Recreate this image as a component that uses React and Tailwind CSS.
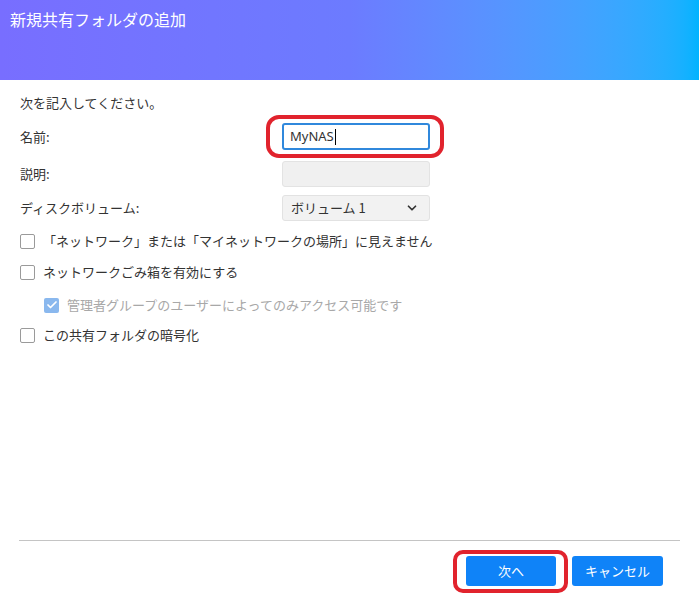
import React from 'react';
import { ChevronDown, Check } from 'lucide-react';

const font = { fontFamily: '"Noto Sans CJK JP", "Noto Sans", sans-serif' };

const Box = ({ checked }) =>
    checked ? (
        <span className="w-[15px] h-[15px] rounded-[2px] bg-[#8ab8ee] flex items-center justify-center shrink-0">
            <Check className="w-[12px] h-[12px] text-white" strokeWidth={3.5} />
        </span>
    ) : (
        <span className="w-[15px] h-[15px] rounded-[2px] border-[1.5px] border-[#9a9a9a] bg-white shrink-0" />
    );

const Option = ({ label, checked, disabled, className }) => (
    <div className={`flex items-center h-[20px] ${className}`}>
        <Box checked={checked} />
        <span className={`ml-[8px] ${disabled ? 'text-[#a8a8a8]' : 'text-[#333]'}`}>{label}</span>
    </div>
);

export default function App() {
    return (
        <div className="w-[699px] h-[599px] bg-white flex flex-col text-[13px] text-[#333]" style={font}>
            {/* Header */}
            <div className="h-[80px] shrink-0 bg-linear-to-r from-[#786eff] via-[#6c7bff] via-50% to-[#00b3ff] pl-[10px] pt-[7px]">
                <h1 className="text-[16px] text-white leading-[24px]">新規共有フォルダの追加</h1>
            </div>

            {/* Body */}
            <div className="flex-1 px-[20px] pt-[14px]">
                <p className="leading-[18px]">次を記入してください。</p>

                <div className="grid grid-cols-[262px_148px] items-center mt-[11px]">
                    <span>名前:</span>
                    <div className="relative h-[27px]">
                        <div className="h-full border-2 border-[#3088dc] rounded-[3px] flex items-center pl-[6px] text-[13px]" style={{ fontFamily: '"Noto Sans", sans-serif' }}>
                            MyNAS<span className="w-px h-[16px] bg-black ml-px" />
                        </div>
                        <div className="absolute -left-[16px] -right-[14px] -top-[8px] -bottom-[8px] border-[4px] border-[#e1232d] rounded-[13px] pointer-events-none" />
                    </div>
                </div>

                <div className="grid grid-cols-[262px_148px] items-center mt-[11px]">
                    <span>説明:</span>
                    <div className="h-[26px] bg-[#f0f0f0] border border-[#e3e3e3] rounded-[3px]" />
                </div>

                <div className="grid grid-cols-[262px_148px] items-center mt-[8px]">
                    <span>ディスクボリューム:</span>
                    <div className="h-[26px] bg-[#f2f2f2] border border-[#e2e2e2] rounded-[3px] flex items-center justify-between pl-[8px] pr-[10px]">
                        <span>ボリューム 1</span>
                        <ChevronDown className="w-[14px] h-[14px] text-[#333]" strokeWidth={3} />
                    </div>
                </div>

                <Option className="mt-[10px]" label="「ネットワーク」または「マイネットワークの場所」に見えません" />
                <Option className="mt-[11px]" label="ネットワークごみ箱を有効にする" />
                <Option className="mt-[13px] ml-[24px]" checked disabled label="管理者グループのユーザーによってのみアクセス可能です" />
                <Option className="mt-[10px]" label="この共有フォルダの暗号化" />
            </div>

            {/* Footer */}
            <div className="h-px bg-[#c4c4c4] mx-[19px] shrink-0" />
            <div className="flex justify-end gap-[16px] pt-[15px] pb-[13px] pr-[36px] shrink-0">
                <div className="relative">
                    <button className="w-[90px] h-[30px] bg-[#0f83f8] text-white rounded-[3px]">次へ</button>
                    <div className="absolute -left-[13px] -right-[12px] -top-[6px] -bottom-[7px] border-[4px] border-[#e1232d] rounded-[10px] pointer-events-none" />
                </div>
                <button className="w-[91px] h-[30px] bg-[#0f83f8] text-white rounded-[3px]">キャンセル</button>
            </div>
        </div>
    );
}
